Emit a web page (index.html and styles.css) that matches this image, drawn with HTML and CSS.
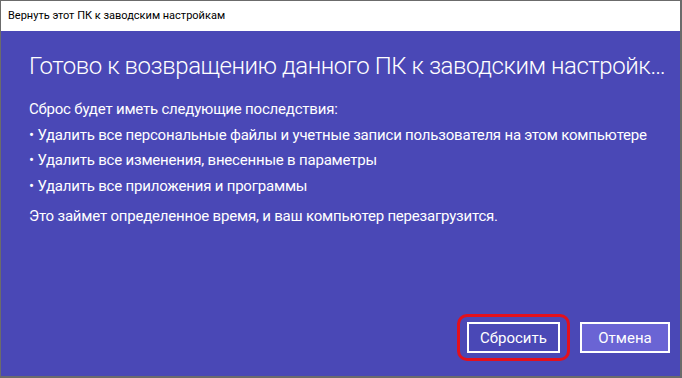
FILE: index.html
```html
<!DOCTYPE html>
<html lang="ru">
<head>
<meta charset="utf-8">
<link rel="stylesheet" href="styles.css">
</head>
<body>
<div class="window">
  <div class="titlebar">Вернуть этот ПК к заводским настройкам</div>
  <div class="content">
    <h1 class="heading">Готово к возвращению данного ПК к заводским настройкам</h1>
    <div class="body">
      <p class="line">Сброс будет иметь следующие последствия:</p>
      <p class="line">• Удалить все персональные файлы и учетные записи пользователя на этом компьютере</p>
      <p class="line">• Удалить все изменения, внесенные в параметры</p>
      <p class="line">• Удалить все приложения и программы</p>
      <p class="line note">Это займет определенное время, и ваш компьютер перезагрузится.</p>
    </div>
    <div class="actions">
      <div class="highlight"><button class="btn">Сбросить</button></div>
      <button class="btn cancel">Отмена</button>
    </div>
  </div>
</div>
</body>
</html>
```

FILE: styles.css
```css
* { box-sizing: border-box; }
html, body { margin: 0; padding: 0; }
body {
  width: 682px;
  height: 378px;
  background: #6b6b6b;
  overflow: hidden;
  font-family: "Roboto", "Noto Sans", sans-serif;
}
.window {
  margin: 1px 0 0 1px;
  width: 679px;
  height: 375px;
  display: flex;
  flex-direction: column;
}
.titlebar {
  height: 30px;
  background: #ffffff;
  color: #000;
  font-size: 11px;
  padding: 8px 0 0 7px;
  line-height: 14px;
}
.content {
  flex: 1;
  background: #4a48b6;
  color: #ffffff;
  padding: 19px 10px 23px 28px;
  display: flex;
  flex-direction: column;
}
.heading {
  margin: 0;
  font-weight: 300;
  font-size: 24px;
  letter-spacing: -0.45px;
  line-height: 32px;
  white-space: nowrap;
  overflow: hidden;
  text-overflow: ellipsis;
  width: 641px;
}
.body {
  margin-top: 15px;
  font-size: 15px;
  letter-spacing: -0.2px;
}
.line {
  margin: 0;
  line-height: 25.5px;
}
.note { margin-top: 5px; }
.actions {
  margin-top: auto;
  display: flex;
  justify-content: flex-end;
  align-items: center;
  gap: 20px;
}
.highlight {
  border: 3px solid #e3101c;
  border-radius: 10px;
  padding: 5px 7px;
  margin: -8px -10px;
}
.btn {
  display: block;
  width: 93px;
  height: 31px;
  border: 2px solid #ffffff;
  background: #4a48b6;
  color: #fff;
  font-family: inherit;
  font-size: 15px;
  padding: 0;
}
.cancel {
  width: 90px;
  background: #6a64d4;
}
```
